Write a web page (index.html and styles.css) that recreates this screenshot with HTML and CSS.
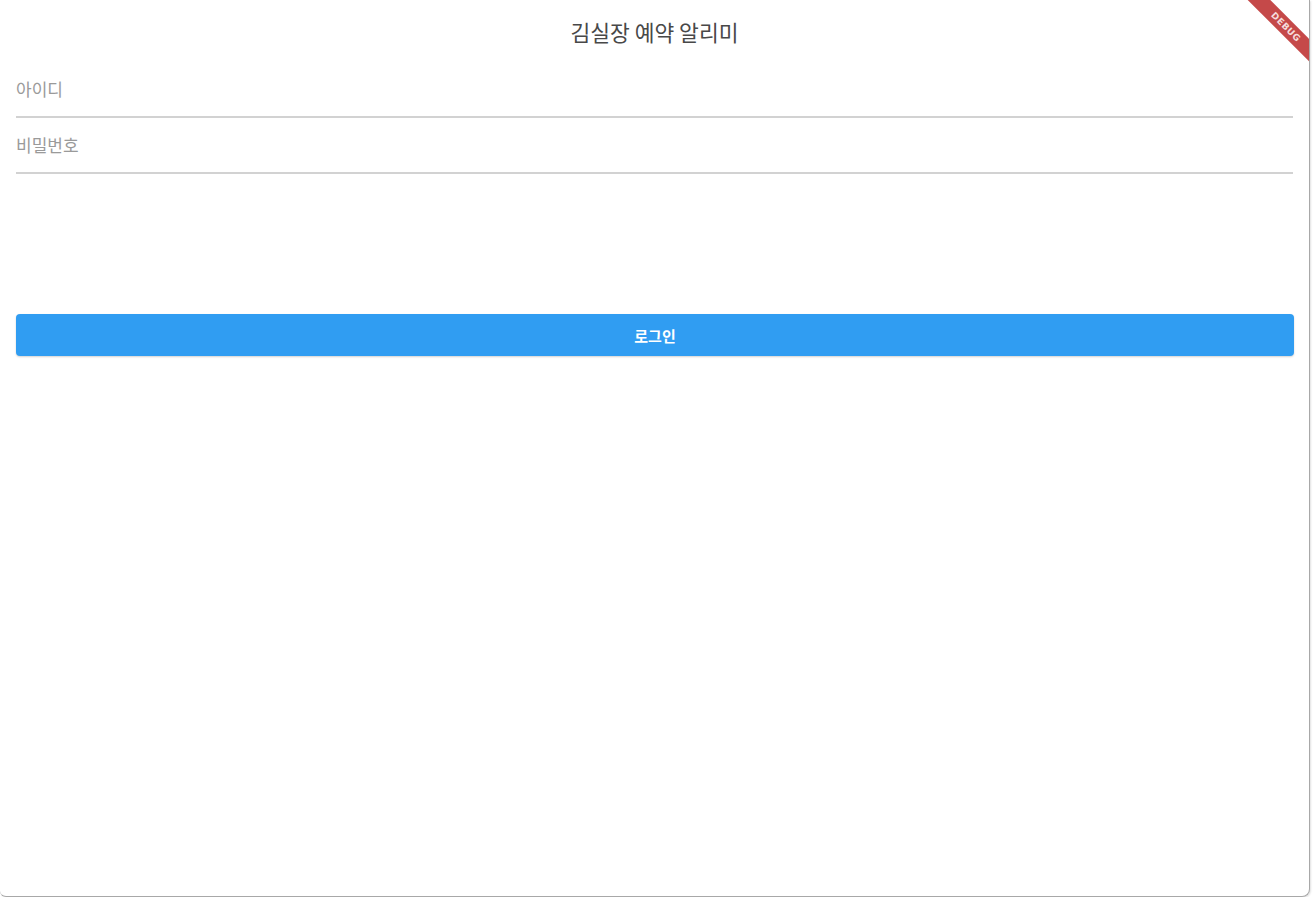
FILE: index.html
```html
<!DOCTYPE html>
<html>
	<head>
		<title>김실장 예약 알리미</title>
		<link rel="stylesheet" href="styles.css">
	</head>
	<body>
		<div class="window">
			<div class="debug-banner"><span>DEBUG</span></div>
			<h1 class="title">김실장 예약 알리미</h1>
			<form class="login-form">
				<div class="field">
					<input type="text" placeholder="아이디" />
				</div>
				<div class="field">
					<input type="password" placeholder="비밀번호" />
				</div>
				<button type="button" class="login-button">로그인</button>
			</form>
		</div>
	</body>
</html>
```

FILE: styles.css
```css
body {
	margin: 0;
	padding: 0;
	background-color: #ffffff;
	font-family: "Noto Sans CJK KR", "Noto Sans", sans-serif;
	overflow: hidden;
}
.window {
	position: relative;
	width: 1309px;
	height: 896px;
	background-color: #ffffff;
	border-right: 1px solid #a8a8a8;
	border-bottom: 1px solid #a8a8a8;
	border-radius: 0 0 8px 6px;
	box-shadow: 1px 1px 2px rgba(0, 0, 0, 0.12);
	overflow: hidden;
}
.title {
	margin: 0;
	height: 62px;
	line-height: 64px;
	text-align: center;
	font-size: 21.5px;
	font-weight: 400;
	color: #484848;
}
.login-form {
	margin: 0 16px;
	display: flex;
	flex-direction: column;
}
.field {
	height: 54px;
	border-bottom: 2px solid #d2d2d2;
}
.field input {
	width: 100%;
	box-sizing: border-box;
	height: 54px;
	padding: 17px 0 19px 0;
	border: none;
	outline: none;
	background: transparent;
	font-family: inherit;
	font-size: 17px;
	line-height: 18px;
	color: #333333;
}
.field input::placeholder {
	color: #9a9a9a;
}
.login-button {
	margin-top: 140px;
	margin-right: -1px;
	height: 42px;
	border: none;
	border-radius: 4px;
	background-color: #309df2;
	color: #ffffff;
	font-family: inherit;
	font-size: 15px;
	font-weight: 700;
	box-shadow: 0 1px 2px rgba(0, 0, 0, 0.18);
}
.debug-banner {
	position: absolute;
	top: 19px;
	right: -35px;
	width: 116px;
	height: 16px;
	background-color: rgba(183, 28, 28, 0.8);
	transform: rotate(45deg);
	display: flex;
	align-items: center;
	justify-content: center;
}
.debug-banner span {
	font-family: "DejaVu Sans", sans-serif;
	font-size: 9px;
	font-weight: 700;
	color: #f6dcdc;
	letter-spacing: 0.5px;
}
```
